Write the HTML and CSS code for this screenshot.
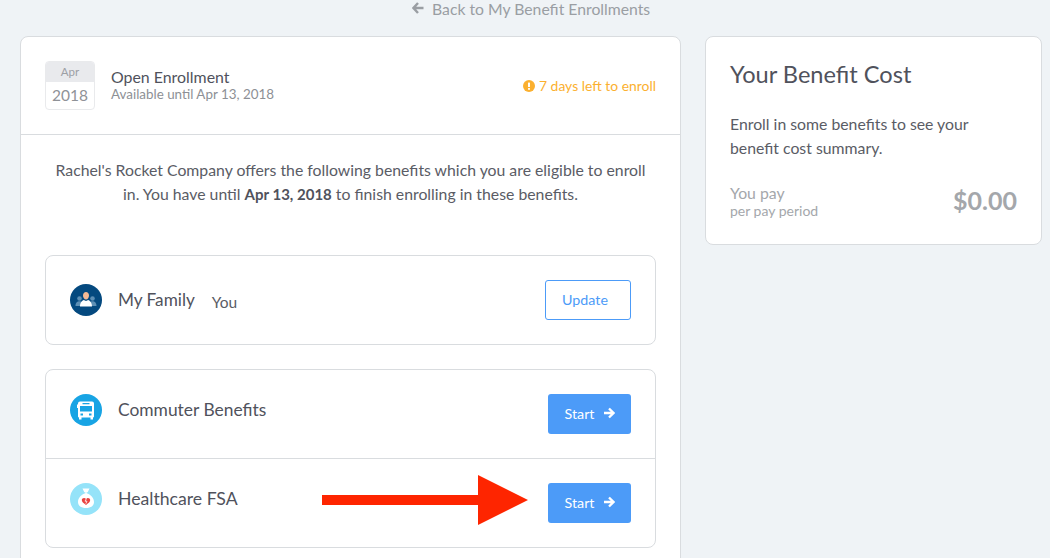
FILE: index.html
```html
<!DOCTYPE html>
<html lang="en">
<head>
<meta charset="utf-8">
<title>Benefit Enrollment</title>
<link rel="stylesheet" href="styles.css">
</head>
<body>
<a class="back" href="#">
  <svg class="back-icon" viewBox="0 0 12 12"><path d="M6 1 1.500 6 6 11M2 6h9.500" fill="none" stroke="currentColor" stroke-width="2.400"/></svg>
  Back to My Benefit Enrollments
</a>
<div class="columns">
  <main class="card main-card">
    <header class="enroll-head">
      <div class="date">
        <div class="date-month">Apr</div>
        <div class="date-year">2018</div>
      </div>
      <div class="enroll-title">
        <div class="enroll-name">Open Enrollment</div>
        <div class="enroll-until">Available until Apr 13, 2018</div>
      </div>
      <div class="days-left">
        <svg class="alert" viewBox="0 0 12 12"><circle cx="6" cy="6" r="6" fill="#fbb02f"/><rect x="5" y="2.400" width="2" height="4.600" rx=".6" fill="#fff"/><rect x="5" y="7.900" width="2" height="1.800" rx=".5" fill="#fff"/></svg>
        7 days left to enroll
      </div>
    </header>
    <p class="intro">Rachel's Rocket Company offers the following benefits which you are eligible to enroll in. You have until <b>Apr 13, 2018</b> to finish enrolling in these benefits.</p>
    <section class="panel family">
      <div class="row family-row">
        <svg class="badge" viewBox="0 0 32 32">
          <circle cx="16" cy="16" r="16" fill="#04497f"/>
          <circle cx="9.500" cy="14.500" r="2.300" fill="#5d8fb5"/><circle cx="22.500" cy="14.500" r="2.300" fill="#5d8fb5"/>
          <path d="M5.500 22c0-3.500 2-4.800 4-4.800s4 1.300 4 4.800zM18.500 22c0-3.500 2-4.800 4-4.800s4 1.300 4 4.800z" fill="#5d8fb5"/>
          <path d="M13 11.500c0-2 1.300-3.500 3-3.500s3 1.500 3 3.500-1.300 4-3 4-3-2-3-4z" fill="#f4b995"/>
          <path d="M10 22.500c0-4.300 2.500-6 3.800-6.500l2.200 1 2.200-1c1.300.5 3.800 2.200 3.800 6.500z" fill="#fff"/>
        </svg>
        <span class="row-name">My Family</span>
        <span class="you">You</span>
        <button class="btn btn-outline">Update</button>
      </div>
    </section>
    <section class="panel benefits">
      <div class="row">
        <svg class="badge" viewBox="0 0 32 32">
          <circle cx="16" cy="16" r="16" fill="#18a4e4"/>
          <path fill="#fff" fill-rule="evenodd" d="M10 7.500h12a2 2 0 0 1 2 2v13a1 1 0 0 1-1 1v2h-2.500v-2h-9v2H9v-2a1 1 0 0 1-1-1V14H7v-3.500h1v-1a2 2 0 0 1 2-2zM12.500 9v1.300h7V9zM10 12v5.500h12V12zM10.500 19.500v2h2.500v-2zM19 19.500v2h2.500v-2z"/>
        </svg>
        <span class="row-name">Commuter Benefits</span>
        <button class="btn btn-solid">Start <svg class="arrow" viewBox="0 0 12 12"><path d="M6 1.500 10.500 6 6 10.500M10 6H1" fill="none" stroke="currentColor" stroke-width="2.300"/></svg></button>
      </div>
      <div class="row row-split">
        <svg class="badge" viewBox="0 0 32 32">
          <circle cx="16" cy="16" r="16" fill="#95e3f9"/>
          <path fill="#fff" d="M12.500 5.500h7l-1.800 3.800h-1.100v1c4 1.200 7.400 4.500 7.400 8.700 0 3.700-3 6-8 6s-8-2.300-8-6c0-4.200 3.400-7.500 7.400-8.700v-1h-1.100z"/>
          <path fill="#e9423f" d="M16 22c-2.700-1.800-4.200-3.200-4.200-4.900 0-2.400 3.100-3 4.200-1.100 1.100-1.900 4.200-1.300 4.200 1.100 0 1.700-1.500 3.100-4.200 4.900z"/>
          <path d="M16.500 15.500 15 18.200h2l-1.200 2.500" fill="none" stroke="#fff" stroke-width=".8"/>
        </svg>
        <span class="row-name">Healthcare FSA</span>
        <svg class="red-arrow" viewBox="0 0 207 50"><path d="M0 20h156V0l50 25-50 25V30H0z" fill="#fe2500"/></svg>
        <button class="btn btn-solid">Start <svg class="arrow" viewBox="0 0 12 12"><path d="M6 1.500 10.500 6 6 10.500M10 6H1" fill="none" stroke="currentColor" stroke-width="2.300"/></svg></button>
      </div>
    </section>
  </main>
  <aside class="card cost-card">
    <h2 class="cost-title">Your Benefit Cost</h2>
    <p class="cost-text">Enroll in some benefits to see your benefit cost summary.</p>
    <div class="cost-line">
      <div>
        <div class="pay">You pay</div>
        <div class="period">per pay period</div>
      </div>
      <div class="amount">$0.00</div>
    </div>
  </aside>
</div>
</body>
</html>
```
FILE: styles.css
```css
* { box-sizing: border-box; }
html, body { height: 558px; overflow: hidden; }
body {
  margin: 0;
  background: #eff3f6;
  font-family: "Lato", "Liberation Sans", sans-serif;
  color: #50525c;
}
.back {
  display: flex;
  align-items: center;
  gap: 8px;
  height: 16px;
  padding-left: 412px;
  font-size: 15.750px;
  color: #9a9ea3;
  text-decoration: none;
}
.back-icon { width: 12px; height: 12px; }
.columns {
  display: flex;
  align-items: flex-start;
  gap: 24px;
  margin: 20px 8px 0 20px;
}
.card {
  background: #fff;
  border: 1px solid #d9dcdf;
  border-radius: 8px;
}
.main-card { width: 661px; height: 560px; flex: none; }
.enroll-head {
  display: flex;
  align-items: center;
  height: 98px;
  padding: 0 24px;
  border-bottom: 1px solid #d9dcdf;
}
.date {
  width: 50px;
  height: 49px;
  border: 1px solid #e9eaec;
  border-radius: 4px;
  text-align: center;
  overflow: hidden;
}
.date-month {
  height: 20px;
  background: #e9eaed;
  font-size: 11.500px;
  line-height: 20px;
  color: #9da0a5;
}
.date-year {
  font-size: 15.500px;
  line-height: 26px;
  color: #8f9297;
}
.enroll-title { margin-left: 16px; flex: 1; }
.enroll-name { margin: -1px 0 1px; font-size: 15.900px; line-height: 17px; color: #50525c; }
.enroll-until { font-size: 13.400px; line-height: 17px; color: #8d9095; }
.days-left {
  display: flex;
  align-items: center;
  gap: 4px;
  font-size: 13.900px;
  color: #fbb02f;
}
.alert { width: 12px; height: 12px; }
.intro {
  margin: 0 auto;
  padding: 23px 0 0;
  width: 600px;
  height: 120px;
  text-align: center;
  font-size: 15.800px;
  line-height: 24px;
  color: #5a5c65;
}
.intro b { font-size: 15px; font-weight: 700; color: #50525c; }
.panel {
  margin: 0 24px;
  border: 1px solid #d9dcdf;
  border-radius: 8px;
}
.family { height: 90px; margin-bottom: 24px; }
.row {
  display: flex;
  align-items: flex-start;
  height: 88px;
  padding: 24px 24px 0;
  position: relative;
}
.family-row { padding-top: 28px; }
.family-row .btn { margin-top: -4px; }
.row-split { border-top: 1px solid #d9dcdf; height: 89px; }
.badge { width: 32px; height: 32px; flex: none; margin-right: 16px; }
.row-name { font-size: 17.400px; line-height: 32px; color: #50525c; }
.family-row .row-name { font-size: 17.200px; }
.row-split .row-name { font-size: 17.650px; }
.you { margin-left: 17px; font-size: 15.500px; line-height: 36px; color: #5a5c65; }
.btn {
  margin-left: auto;
  width: 83px;
  height: 40px;
  padding: 0 0 2px;
  border-radius: 3px;
  font: 14.300px "Lato", "Liberation Sans", sans-serif;
  display: flex;
  align-items: center;
  justify-content: center;
  gap: 8px;
}
.btn-outline { width: 86px; padding-right: 6px; border: 1px solid #4c9bf8; background: #fff; color: #4c9bf8; }
.btn-solid { border: 0; background: #4c9bf8; color: #fff; }
.arrow { width: 12px; height: 12px; }
.red-arrow {
  position: absolute;
  left: 276px;
  top: 16px;
  width: 207px;
  height: 50px;
}
.cost-card {
  width: 337px;
  height: 209px;
  padding: 23px 24px 0;
  flex: none;
}
.cost-title {
  margin: 0;
  font-size: 23.600px;
  font-weight: 400;
  line-height: 28px;
  color: #50525c;
}
.cost-text {
  width: 270px;
  margin: 24px 0 0;
  font-size: 15.800px;
  line-height: 24px;
  color: #5a5c65;
}
.cost-line {
  display: flex;
  justify-content: space-between;
  align-items: center;
  margin-top: 24px;
}
.pay { font-size: 15.800px; line-height: 18px; color: #a4a7ab; }
.period { font-size: 14px; line-height: 18px; color: #a4a7ab; }
.amount { margin-bottom: 4px; font-size: 25px; font-weight: 700; color: #a4a7ab; }
```
